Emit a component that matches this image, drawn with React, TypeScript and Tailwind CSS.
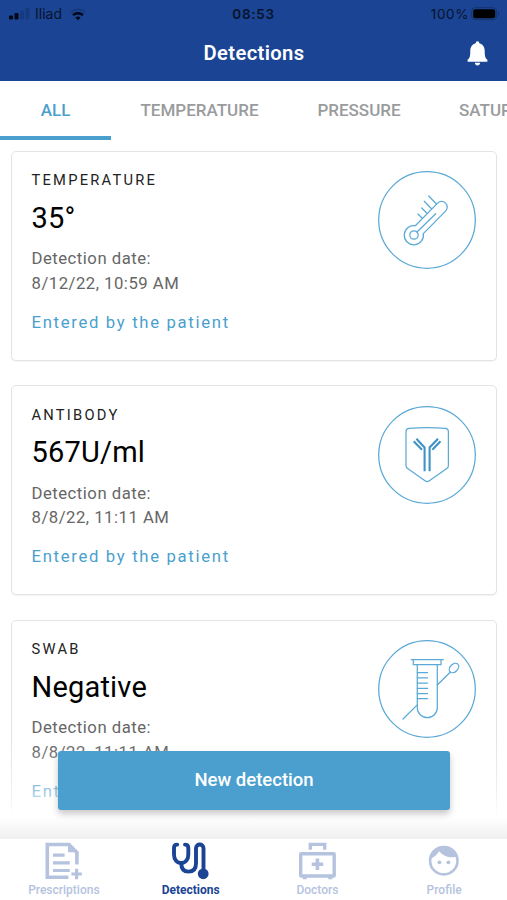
import React from "react";

interface Detection {
  title: string;
  value: string;
  date: string;
  icon: React.ReactNode;
}

const ThermometerIcon = () => (
  <g>
    <path d="M37.3 54.7L59.6 32.1a5.6 5.6 0 0 1 8 8L45.3 62.6A9.6 9.6 0 1 1 37.3 54.7Z" />
    <circle cx="36" cy="64" r="4.2" />
    <path d="M39 61L57.7 42.7M50.7 25l7.8 8M46.3 30.3l7.2 7.4M43.7 37l5 5M40 43l4 4" />
  </g>
);

const AntibodyIcon = () => (
  <g>
    <path d="M31 22.3Q49.2 21 67.4 22.3Q70.4 22.6 70.4 25.5V59.5Q70.4 61.5 68.8 62.6L51 75Q49.2 76.2 47.4 75L29.6 62.6Q28 61.5 28 59.5V25.5Q28 22.6 31 22.3Z" />
    <path
      d="M46.6 65.3V41.5L38.4 32.8M44 43.7L35.7 35.3M51.6 65.3V41.5L60 32.8M54.3 43.7L62.5 35.3"
      strokeWidth="2.1"
      strokeLinecap="butt"
      stroke="#3f93c4"
    />
  </g>
);

const SwabIcon = () => (
  <g>
    <path d="M33.3 19.7H65.3M35.3 19.7V24.7H63V19.7" />
    <path d="M39.3 24.7V67.7a10 10 0 0 0 20 0V24.7" />
    <path d="M39.3 32.5h10.3M39.3 37.8h10.3M39.3 43h10.3M39.3 48.4h10.3M39.3 53.5h10.3M39.3 58.6h10.3" />
    <path d="M59.3 45L72.4 32M39.3 64.9L25 79" />
    <ellipse cx="76" cy="28" rx="3.8" ry="5.5" transform="rotate(45 76 28)" />
  </g>
);

const detections: Detection[] = [
  { title: "TEMPERATURE", value: "35°", date: "8/12/22, 10:59 AM", icon: <ThermometerIcon /> },
  { title: "ANTIBODY", value: "567U/ml", date: "8/8/22, 11:11 AM", icon: <AntibodyIcon /> },
  { title: "SWAB", value: "Negative", date: "8/8/22, 11:11 AM", icon: <SwabIcon /> },
];

const DetectionCard: React.FC<Detection> = ({ title, value, date, icon }) => {
  return (
    <div className="flex h-[210px] shrink-0 justify-between rounded-[5px] border-[1.5px] border-[#e4e4e4] bg-white pl-[19.5px] pr-[20px] pt-[19.5px] shadow-[0_1px_1px_rgba(0,0,0,0.05)]">
      <div className="flex flex-col whitespace-nowrap">
        <h2 className="text-[14.7px] leading-[18px] tracking-[2.25px] text-[#222]">{title}</h2>
        <p className="mt-[10.5px] text-[29px] leading-9 tracking-[0.2px] text-black">{value}</p>
        <p className="mt-[11.5px] text-[16.7px] leading-[24.5px] tracking-[0.5px] text-[#666]">
          Detection date:
          <br />
          {date}
        </p>
        <p className="mt-[14.5px] text-[16.7px] leading-6 tracking-[1.68px] text-[#4a9fce]">Entered by the patient</p>
      </div>
      <svg
        className="size-[98px] shrink-0"
        viewBox="0 0 98 98"
        fill="none"
        stroke="#5ba9d6"
        strokeWidth="1.25"
        strokeLinecap="round"
        strokeLinejoin="round"
      >
        <circle cx="49" cy="49" r="48.3" />
        {icon}
      </svg>
    </div>
  );
};

const StatusBar = () => (
  <div className="grid h-7 grid-cols-3 items-center px-[9px] font-[Inter,sans-serif] text-[13px] text-[#07132c]">
    <div className="flex items-center">
      <svg className="h-3 w-[22px]" viewBox="0 0 22 12" fill="#020817">
        <rect x="0" y="7.5" width="4" height="4" rx="1" />
        <rect x="5.5" y="5" width="4" height="6.5" rx="1" />
        <rect x="11" y="2.5" width="4" height="9" rx="1" opacity="0.16" />
        <rect x="16.5" y="0" width="4" height="11.5" rx="1" opacity="0.16" />
      </svg>
      <span className="ml-[4px] text-[14px] leading-5">Iliad</span>
      <svg className="ml-[8px] h-3 w-4" viewBox="0 0 16 12" fill="none" stroke="#020817" strokeWidth="2.4">
        <path d="M1 4.3a10 10 0 0 1 14 0" strokeWidth="1.8" opacity="0.2" />
        <path d="M3 7.2a7.2 7.2 0 0 1 10 0" />
        <path d="M8 12.2L5.4 9.8a3.6 3.6 0 0 1 5.2 0z" fill="#020817" stroke="none" />
      </svg>
    </div>
    <span className="text-center text-[13.5px] font-semibold leading-5 tracking-[0.7px]">08:53</span>
    <div className="flex items-center justify-end">
      <span className="text-[13.5px] leading-5 tracking-[0.6px]">100%</span>
      <svg className="ml-[2px] -mr-[2px] h-[14px] w-[29px]" viewBox="0 0 29 14">
        <rect x="0.7" y="0.7" width="25" height="12" rx="3.4" fill="none" stroke="#07132c" strokeOpacity="0.35" />
        <rect x="2.2" y="2.3" width="22" height="9" rx="2" fill="#000" />
        <path d="M27 4.5q2 2.3 0 4.5z" fill="#07132c" opacity="0.4" />
      </svg>
    </div>
  </div>
);

const Header = () => (
  <header className="h-[81px] shrink-0 bg-[#1b4594]">
    <StatusBar />
    <div className="grid h-[51px] grid-cols-[1fr_auto_1fr] items-center pr-[19px]">
      <span />
      <h1 className="-mt-[1px] pl-[20px] text-[20.2px] font-semibold leading-6 tracking-[0.35px] text-white">
        Detections
      </h1>
      <svg className="h-[25px] w-[21px] justify-self-end" viewBox="0 0 21 25" fill="#fff">
        <path d="M10.5 0.3C11.8 0.3 12.2 1.3 12.3 2.2C15.7 3 17.7 6 17.7 9.7C17.7 15.5 18.3 17 20.4 18.8V20.8H0.6V18.8C2.7 17 3.3 15.5 3.3 9.7C3.3 6 5.3 3 8.7 2.2C8.8 1.3 9.2 0.3 10.5 0.3Z" />
        <path d="M7.9 21.8H13.1C12.9 23.5 11.9 24.4 10.5 24.4C9.1 24.4 8.1 23.5 7.9 21.8Z" />
      </svg>
    </div>
  </header>
);

const Tabs = () => (
  <nav className="flex h-[59px] shrink-0 overflow-hidden whitespace-nowrap text-[17px] font-medium text-[#999b9d]">
    <span className="flex w-[111px] shrink-0 items-center justify-center border-b-4 border-[#4a9fce] pt-[4px] text-[#4a9fce]">
      ALL
    </span>
    <span className="flex w-[177px] shrink-0 items-center justify-center">TEMPERATURE</span>
    <span className="flex w-[142px] shrink-0 items-center justify-center">PRESSURE</span>
    <span className="flex shrink-0 items-center pl-[29px]">SATURATION</span>
  </nav>
);

const PrescriptionsIcon = () => (
  <g strokeWidth="3.6">
    <path d="M24.4 35.3H3.3V2.5H25L32.9 10.4V22.5" />
    <path d="M24 2V10.2H33L25 2Z" fill="currentColor" stroke="none" />
    <path d="M9 13.2h11.6M9 20.8h16.8M9 28.5h16.8" strokeWidth="3.2" />
    <path d="M32.6 26.8V37.2M27.4 32h10.4" strokeWidth="3.2" />
  </g>
);

const StethoscopeIcon = () => (
  <g strokeWidth="3.9" strokeLinecap="round">
    <path d="M6.2 2.6Q3 2.6 3 6V12.5C3 17.5 6 21 10.3 21C14.6 21 17.3 17.5 17.3 12.5V6Q17.3 2.6 14 2.6" />
    <path d="M10.3 21.5C10.3 27 13 29.6 17.4 29.6C22.1 29.6 25 27 25 21.5V6.2C25 1.2 32.5 1.2 32.5 6.2V31" />
    <circle cx="32.2" cy="31.8" r="5.4" fill="currentColor" stroke="none" />
  </g>
);

const DoctorsIcon = () => (
  <g strokeWidth="3.4">
    <path d="M12.3 7.8V2.4H26.7V7.8" />
    <rect x="2.7" y="11.7" width="33.5" height="22.3" rx="0.5" />
    <path d="M19.4 16.5V28M13.7 22.3h11.5" strokeWidth="3.6" />
    <path d="M4.8 36h4M30.3 36h4" strokeWidth="2.4" />
  </g>
);

const ProfileIcon = () => (
  <g strokeWidth="2.6">
    <circle cx="18.8" cy="18.7" r="13.7" />
    <path
      d="M4.4 16.8C9 16 12 12.6 14 9.2C18.2 14 25 16.6 32.9 14.6C31.2 8.5 25.8 4 18.8 4C11.5 4 5.3 9.5 4.4 16.8Z"
      fill="currentColor"
      stroke="none"
    />
    <circle cx="14.4" cy="20.3" r="1.9" fill="currentColor" stroke="none" />
    <circle cx="23.4" cy="20.3" r="1.9" fill="currentColor" stroke="none" />
  </g>
);

interface NavItemProps {
  label: string;
  icon: React.ReactNode;
  active?: boolean;
}

const NavItem: React.FC<NavItemProps> = ({ label, icon, active }) => (
  <div
    className={
      "flex flex-1 flex-col items-center pt-[3px] text-[12px] leading-[14px] " +
      (active ? "font-bold text-[#1b4594]" : "font-medium text-[#b5c3de]")
    }
  >
    <svg className="size-[38px]" viewBox="0 0 38 38" fill="none" stroke="currentColor">
      {icon}
    </svg>
    <span className="mt-[3px] pl-[1px]">{label}</span>
  </div>
);

const App = () => {
  return (
    <div className="flex h-screen w-full flex-col overflow-hidden bg-white font-[Roboto,sans-serif]">
      <Header />
      <Tabs />
      <main className="relative flex min-h-0 flex-1 flex-col gap-[24.5px] overflow-hidden pl-[11px] pr-[10px] pt-[10.5px]">
        {detections.map((item) => (
          <DetectionCard key={item.title} {...item} />
        ))}
        {/* fades the list out behind the button */}
        <div className="absolute inset-x-0 bottom-0 h-[100px] bg-linear-to-b from-white/0 via-white/40 via-50% to-white to-80%" />
        <div className="absolute inset-x-0 bottom-0 h-[22px] bg-linear-to-b from-black/0 to-black/6" />
        <button className="absolute bottom-[29px] left-[58px] h-[59px] w-[392px] rounded-[3px] bg-[#4a9fce] text-[18.5px] font-medium text-white shadow-[0_4px_7px_rgba(0,0,0,0.22)]">
          New detection
        </button>
      </main>
      <footer className="flex h-[61px] shrink-0 bg-white">
        <NavItem label="Prescriptions" icon={<PrescriptionsIcon />} />
        <NavItem label="Detections" icon={<StethoscopeIcon />} active />
        <NavItem label="Doctors" icon={<DoctorsIcon />} />
        <NavItem label="Profile" icon={<ProfileIcon />} />
      </footer>
    </div>
  );
};

export default App;
